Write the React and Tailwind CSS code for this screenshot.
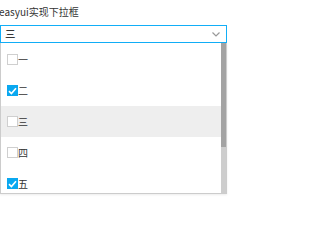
import { useState } from "react";

const items = [
  { label: "一", checked: false },
  { label: "二", checked: true },
  { label: "三", checked: false },
  { label: "四", checked: false },
  { label: "五", checked: true },
];

function Check({ checked }) {
  if (checked) {
    return (
      <span className="w-[11px] h-[11px] bg-[#0aa8f0] flex items-center justify-center shrink-0">
        <svg width="9" height="8" viewBox="0 0 9 8">
          <path d="M1 4.2 L3.4 6.5 L8 1.2" fill="none" stroke="#fff" strokeWidth="1.6" />
        </svg>
      </span>
    );
  }
  return <span className="w-[11px] h-[11px] border border-[#cfcfcf] bg-white shrink-0" />;
}

export default function App() {
  const [hover] = useState(2);

  return (
    <div
      className="w-[242px] h-[227px] bg-white text-[#333] overflow-hidden"
      style={{ fontFamily: '"Noto Sans CJK SC", "Noto Sans", sans-serif' }}
    >
      <div className="text-[10px] leading-[14px] pt-[5px] -ml-[1px] h-[25px]">easyui实现下拉框</div>
      <div className="w-[227px] h-[18px] border border-[#12aef7] flex items-center justify-between pl-[4px] pr-[6px]">
        <span className="text-[10.5px] leading-[14px] text-black">三</span>
        <svg width="8" height="5" viewBox="0 0 8 5">
          <path d="M0.5 0.5 L4 4 L7.5 0.5" fill="none" stroke="#999" strokeWidth="1.2" />
        </svg>
      </div>
      <div className="w-[227px] h-[151px] border border-[#cccccc] border-t-0 flex shadow-[0_1px_2px_rgba(0,0,0,0.08)]">
        <div className="flex-1 overflow-hidden pt-[1px]">
          {items.map((it, i) => (
            <div
              key={it.label}
              className={`h-[31px] flex items-center pl-[6px] text-[10px] leading-none ${
                i === hover ? "bg-[#eeeeee]" : ""
              }`}
            >
              <Check checked={it.checked} />
              <span>{it.label}</span>
            </div>
          ))}
        </div>
        <div className="w-[5px] bg-[#cdcdcd] flex flex-col">
          <div className="h-[104px] bg-[#a3a3a3]" />
        </div>
      </div>
    </div>
  );
}
